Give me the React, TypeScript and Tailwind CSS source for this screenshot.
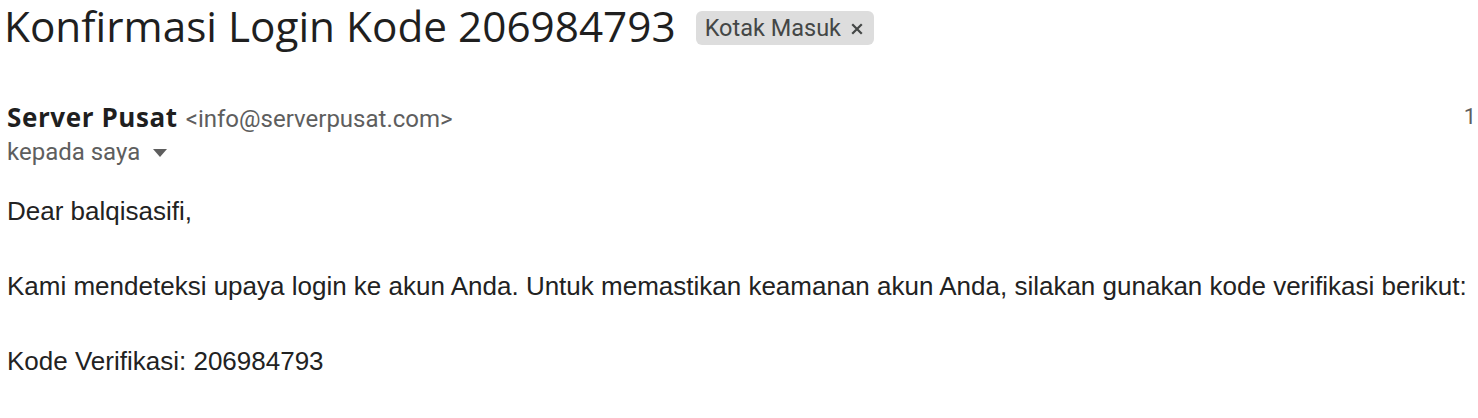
import React from "react";

export default function App() {
  return (
    <div className="w-[1478px] h-[418px] bg-white overflow-hidden relative">
      <div className="flex items-center pl-[4px] h-[51px]">
        <h1 className="text-[42.3px] leading-[51px] text-[#1f1f1f] font-normal whitespace-nowrap" style={{ fontFamily: '"Open Sans", sans-serif' }}>
          Konfirmasi Login Kode 206984793
        </h1>
        <div className="ml-[20px] mt-[5px] h-[34px] flex items-center rounded-[6px] bg-[#dddddd] pl-[9px] pr-[11px]">
          <span className="text-[23.5px] leading-[28px] text-[#444746] whitespace-nowrap" style={{ fontFamily: 'Roboto, sans-serif' }}>
            Kotak Masuk
          </span>
          <svg className="ml-[10px] mt-[2px]" width="12" height="12" viewBox="0 0 12 12">
            <path d="M2 2 L10 10 M10 2 L2 10" stroke="#444746" strokeWidth="2.2" strokeLinecap="square" />
          </svg>
        </div>
      </div>

      <div className="mt-[52px] flex items-start justify-between pl-[7px] pr-[2px]">
        <div className="flex items-baseline whitespace-nowrap" style={{ fontFamily: 'Roboto, sans-serif' }}>
          <span className="text-[26px] leading-[28px] font-bold text-[#1f1f1f] tracking-[0.6px]" style={{ fontFamily: '"Open Sans", sans-serif' }}>
            Server Pusat
          </span>
          <span className="ml-[8px] text-[24px] leading-[28px] text-[#5e5e5e]">&lt;info@serverpusat.com&gt;</span>
        </div>
        <span className="text-[22px] leading-[28px] text-[#5e5e5e]" style={{ fontFamily: 'Roboto, sans-serif' }}>1</span>
      </div>

      <div className="mt-[5px] flex items-center pl-[7px] h-[28px]" style={{ fontFamily: 'Roboto, sans-serif' }}>
        <span className="text-[24px] leading-[28px] text-[#5e5e5e] whitespace-nowrap">kepada saya</span>
        <svg className="ml-[12px] mt-[2px]" width="16" height="10" viewBox="0 0 16 10">
          <path d="M1 1 L15 1 L8 9 Z" fill="#5e5e5e" />
        </svg>
      </div>

      <div className="mt-[27px] pl-[7px] text-[26px] leading-[37.5px] text-[#222222] whitespace-nowrap" style={{ fontFamily: '"Liberation Sans", Arial, sans-serif' }}>
        <div>Dear balqisasifi,</div>
        <div className="h-[37.5px]"></div>
        <div>Kami mendeteksi upaya login ke akun Anda. Untuk memastikan keamanan akun Anda, silakan gunakan kode verifikasi berikut:</div>
        <div className="h-[37.5px]"></div>
        <div>Kode Verifikasi: 206984793</div>
      </div>
    </div>
  );
}
